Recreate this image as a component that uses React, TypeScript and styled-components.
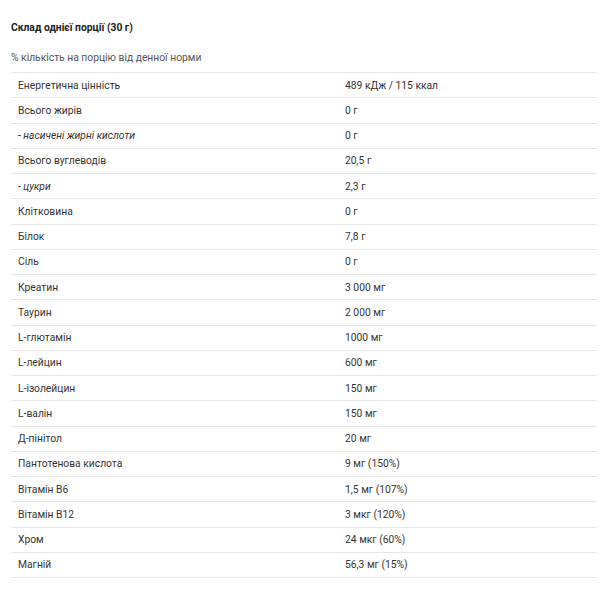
import React from "react";
import styled, { createGlobalStyle } from "styled-components";

const Global = createGlobalStyle`
  html, body { margin: 0; padding: 0; background: #fff; }
  body { font-family: Roboto, "Noto Sans", Arial, sans-serif; color: #333; }
`;

const Page = styled.div`
  padding: 21px 3px 0 11px;
`;

const Title = styled.h3`
  margin: 0;
  font-size: 10.3px;
  line-height: 14px;
  font-weight: 700;
  color: #222;
`;

const Subtitle = styled.p`
  margin: 16px 0 0;
  font-size: 10.3px;
  line-height: 14px;
  color: #555;
`;

const Table = styled.div`
  margin-top: 7px;
  border-top: 1px solid #e6e6e6;
`;

const Row = styled.div`
  display: grid;
  grid-template-columns: 327px 1fr;
  border-bottom: 1px solid #e6e6e6;
  height: 25.25px;
  box-sizing: border-box;
  align-items: center;
`;

const Cell = styled.div<{ $italic?: boolean }>`
  padding: 0 7px;
  font-size: 10.3px;
  color: #333;
  font-style: ${(p) => (p.$italic ? "italic" : "normal")};
  white-space: nowrap;
`;

const rows: [string, string, boolean?][] = [
  ["Енергетична цінність", "489 кДж / 115 ккал"],
  ["Всього жирів", "0 г"],
  ["- насичені жирні кислоти", "0 г", true],
  ["Всього вуглеводів", "20,5 г"],
  ["- цукри", "2,3 г", true],
  ["Клітковина", "0 г"],
  ["Білок", "7,8 г"],
  ["Сіль", "0 г"],
  ["Креатин", "3 000 мг"],
  ["Таурин", "2 000 мг"],
  ["L-глютамін", "1000 мг"],
  ["L-лейцин", "600 мг"],
  ["L-ізолейцин", "150 мг"],
  ["L-валін", "150 мг"],
  ["Д-пінітол", "20 мг"],
  ["Пантотенова кислота", "9 мг (150%)"],
  ["Вітамін В6", "1,5 мг (107%)"],
  ["Вітамін В12", "3 мкг (120%)"],
  ["Хром", "24 мкг (60%)"],
  ["Магній", "56,3 мг (15%)"],
];

export default function App() {
  return (
    <>
      <Global />
      <Page>
        <Title>Склад однієї порції (30 г)</Title>
        <Subtitle>% кількість на порцію від денної норми</Subtitle>
        <Table>
          {rows.map(([k, v, it]) => (
            <Row key={k}>
              <Cell $italic={it}>{k}</Cell>
              <Cell>{v}</Cell>
            </Row>
          ))}
        </Table>
      </Page>
    </>
  );
}
